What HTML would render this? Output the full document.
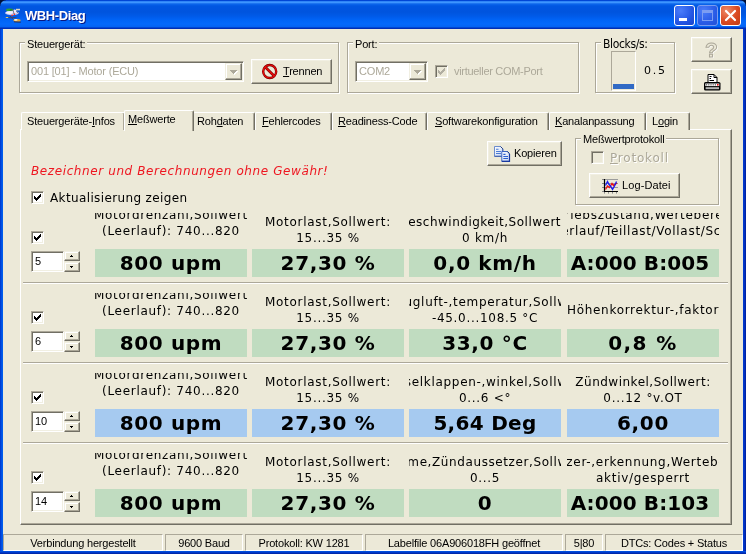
<!DOCTYPE html>
<html lang="de">
<head>
<meta charset="utf-8">
<title>WBH-Diag</title>
<style>
html,body{margin:0;padding:0;}
body{width:746px;height:554px;overflow:hidden;background:#ECE9D8;position:relative;
  font-family:"Liberation Sans","DejaVu Sans",sans-serif;font-size:11px;color:#000;letter-spacing:-0.18px;}
*{box-sizing:border-box;}
i{font-style:normal;}
.abs{position:absolute;}
#win{position:absolute;left:0;top:0;width:746px;height:554px;background:#ECE9D8;overflow:hidden;filter:grayscale(0);}
#titlebar{position:absolute;left:0;top:0;width:746px;height:29px;
  background:linear-gradient(to bottom,#0046D6 0.5px,#2F85F7 1.5px,#3D95FF 2.5px,#1C74F0 3.5px,#0862EA 4.5px,#0056E1 6px,#0054DE 12px,#005AE8 16px,#0064F6 20px,#0469FB 24px,#0464F4 26.5px,#0048D4 27.5px,#002EB5 28.5px,#0030B8 29px);}
#bl{position:absolute;left:0;top:29px;width:3px;height:525px;background:linear-gradient(to right,#0033C8,#0050E4 50%,#0062F0);}
#br{position:absolute;right:0;top:29px;width:3px;height:525px;background:linear-gradient(to left,#001C98,#0030C0 50%,#003CD4);}
#bb{position:absolute;left:0;bottom:0;width:746px;height:3px;background:linear-gradient(to bottom,#0058E8,#0038C8 50%,#00209C);}
#title{position:absolute;left:25px;top:8px;font-weight:bold;font-size:13px;line-height:15px;color:#fff;text-shadow:1px 1px 0 #0A1883;white-space:nowrap;letter-spacing:-0.4px;}
.tbtn{position:absolute;top:5px;width:21px;height:21px;border:1px solid #fff;border-radius:3px;}
.gbl{position:absolute;background:#ECE9D8;padding:0 2px;white-space:nowrap;line-height:13px;}
.t{position:absolute;white-space:nowrap;line-height:13px;}
.dis{color:#ACA899;}
.v{font-family:"DejaVu Sans","Liberation Sans",sans-serif;letter-spacing:0;}
.lab{position:absolute;width:152px;overflow:hidden;font-family:"DejaVu Sans","Liberation Sans",sans-serif;font-size:12px;line-height:16px;letter-spacing:0.7px;}
.lab span{position:absolute;left:-100px;right:-100px;text-align:center;white-space:nowrap;}
.val{position:absolute;width:152px;height:28px;text-align:center;font-family:"DejaVu Sans","Liberation Sans",sans-serif;font-weight:bold;font-size:20px;line-height:28px;letter-spacing:0.65px;white-space:nowrap;overflow:hidden;}
.g{background:#C0DCC0;}
.b{background:#A6CAF0;}
.sep{position:absolute;left:23px;width:705px;height:2px;border-top:1px solid #ACA899;border-bottom:1px solid #fff;}
.btn{position:absolute;border:1px solid;border-color:#fff #716F64 #716F64 #fff;background:#ECE9D8;box-shadow:inset -1px -1px 0 #ACA899,inset 1px 1px 0 #F1EFE2;}
.edit{position:absolute;background:#fff;border:1px solid;border-color:#ACA899 #fff #fff #ACA899;box-shadow:inset 1px 1px 0 #716F64,inset -1px -1px 0 #F1EFE2;}
.edit span{position:absolute;left:3px;top:3px;line-height:13px;white-space:nowrap;}
.cbtn{position:absolute;border:1px solid;border-color:#F1EFE2 #716F64 #716F64 #F1EFE2;background:#ECE9D8;box-shadow:inset -1px -1px 0 #ACA899,inset 1px 1px 0 #fff;}
.spin{position:absolute;width:16px;border:1px solid;border-color:#F1EFE2 #716F64 #716F64 #F1EFE2;background:#ECE9D8;box-shadow:inset -1px -1px 0 #ACA899,inset 1px 1px 0 #fff;}
.up{position:absolute;left:5px;top:3px;width:3px;height:2px;background:linear-gradient(#000,#000) 1px 0/1px 1px no-repeat,linear-gradient(#000,#000) 0 1px/3px 1px no-repeat;}
.dn{position:absolute;left:5px;top:3px;width:3px;height:2px;background:linear-gradient(#000,#000) 0 0/3px 1px no-repeat,linear-gradient(#000,#000) 1px 1px/1px 1px no-repeat;}
.cbtn .dn{left:4px;top:6px;width:8px;height:5px;background:linear-gradient(#ACA899,#ACA899) 0px 0px/7px 1px no-repeat,linear-gradient(#ACA899,#ACA899) 1px 1px/5px 1px no-repeat,linear-gradient(#ACA899,#ACA899) 2px 2px/3px 1px no-repeat,linear-gradient(#ACA899,#ACA899) 3px 3px/1px 1px no-repeat,linear-gradient(#fff,#fff) 1px 1px/7px 1px no-repeat,linear-gradient(#fff,#fff) 2px 2px/5px 1px no-repeat,linear-gradient(#fff,#fff) 3px 3px/3px 1px no-repeat,linear-gradient(#fff,#fff) 4px 4px/1px 1px no-repeat;}
.cb{position:absolute;width:13px;height:13px;border:1px solid;border-color:#ACA899 #fff #fff #ACA899;background:#fff;box-shadow:inset 1px 1px 0 #716F64,inset -1px -1px 0 #F1EFE2;}
.cbd{background:#ECE9D8;}
.chk{position:absolute;left:2px;top:2px;width:7px;height:7px;background:linear-gradient(#000,#000) 0 2px/1px 3px no-repeat,linear-gradient(#000,#000) 1px 3px/1px 3px no-repeat,linear-gradient(#000,#000) 2px 4px/1px 3px no-repeat,linear-gradient(#000,#000) 3px 3px/1px 3px no-repeat,linear-gradient(#000,#000) 4px 2px/1px 3px no-repeat,linear-gradient(#000,#000) 5px 1px/1px 3px no-repeat,linear-gradient(#000,#000) 6px 0/1px 3px no-repeat;}
.chkd{filter:invert(67%) sepia(8%) saturate(300%) hue-rotate(10deg);}
.panel{position:absolute;border:1px solid;border-color:#fff #716F64 #716F64 #fff;box-shadow:inset -1px -1px 0 #ACA899;}
.tab{position:absolute;top:112px;height:18px;border:1px solid;border-color:#fff #716F64 transparent #fff;border-bottom:0;border-radius:2px 2px 0 0;box-shadow:inset -1px 0 0 #ACA899;background:#ECE9D8;}
.tab span{position:absolute;top:2px;line-height:13px;white-space:nowrap;}
.tab.act{top:110px;height:21px;}
.sbp{position:absolute;top:534px;height:17px;border:1px solid;border-color:#ACA899 #fff #fff #ACA899;text-align:center;line-height:16px;white-space:nowrap;overflow:hidden;}
.gb{position:absolute;border:1px solid #ACA899;box-shadow:1px 1px 0 #fff,inset 1px 1px 0 #fff;}
</style>
</head>
<body>
<div id="win">
  <div id="titlebar"></div>
  <div id="bl"></div><div id="br"></div><div id="bb"></div>
  <svg class="abs" style="left:5px;top:8px" width="16" height="15" viewBox="0 0 16 15">
    <ellipse cx="4.6" cy="1.9" rx="3.6" ry="1.4" fill="#2EA234"/><ellipse cx="6.2" cy="2.6" rx="1.6" ry="1" fill="#176A1E"/>
    <rect x="11" y="0.8" width="4" height="1.6" fill="#DAD8C4"/>
    <ellipse cx="7" cy="5" rx="7" ry="2.2" fill="#C9C9F2"/><ellipse cx="4.5" cy="4.6" rx="3.4" ry="1.3" fill="#F4F4FF"/>
    <circle cx="9.6" cy="3.4" r="2" fill="#EDEDFB"/><path d="M8 1.2 L9 6 M11.2 3 L13.5 5.5" stroke="#555A78" stroke-width="0.8"/>
    <circle cx="7.1" cy="7.4" r="0.8" fill="#FF2A10"/><circle cx="9.4" cy="6.3" r="0.8" fill="#FF2A10"/>
    <path d="M1 9.3 L6 9.9 L11.5 9.2 M5 8 L8.5 11.5" stroke="#3F4468" stroke-width="1" fill="none"/><rect x="0.8" y="9" width="2.4" height="1" fill="#D6C870"/>
    <ellipse cx="12" cy="12.4" rx="3.6" ry="1.4" fill="#E9A233"/><ellipse cx="10.8" cy="11.9" rx="1.8" ry="0.8" fill="#F8F4E8"/><path d="M9 13.8 L15.8 14.2" stroke="#2A2F50" stroke-width="1"/>
  </svg>
  <div class="abs" style="left:0;top:0;width:6px;height:6px;background:radial-gradient(circle at 100% 100%,rgba(0,16,58,0) 5.2px,#00103A 6.2px)"></div>
  <div class="abs" style="right:0;top:0;width:6px;height:6px;background:radial-gradient(circle at 0 100%,rgba(0,16,58,0) 5.2px,#00103A 6.2px)"></div>
  <div id="title">WBH-Diag</div>
  <div class="tbtn" style="left:674px;background:radial-gradient(circle at 30% 25%,#4B7DFA 0%,#2456E4 60%,#1A44C8 100%)"><i style="position:absolute;left:4px;top:12px;width:8px;height:3px;background:#fff"></i></div>
  <div class="tbtn" style="left:697px;border-color:#7A9CF0;background:radial-gradient(circle at 30% 25%,#4B7DFA 0%,#2A5BE6 60%,#2250D8 100%)"><i style="position:absolute;left:4px;top:4px;width:11px;height:11px;border:1px solid #7C9DF2;border-top-width:3px"></i></div>
  <div class="tbtn" style="left:720px;background:radial-gradient(circle at 30% 25%,#EE8A68 0%,#DA4A22 55%,#C23A14 100%)">
    <svg style="position:absolute;left:3px;top:3px" width="13" height="13" viewBox="0 0 13 13"><path d="M2 2 L11 11 M11 2 L2 11" stroke="#fff" stroke-width="2.2" stroke-linecap="round"/></svg></div>

  <!-- Steuergerät group -->
  <div class="gb" style="left:19px;top:42px;width:320px;height:51px"></div>
  <div class="gbl" style="left:25px;top:38px">Steuergerät:</div>
  <div class="edit" style="left:27px;top:61px;width:217px;height:21px"><span class="dis" style="left:3px">001 [01] - Motor (ECU)</span></div>
  <div class="cbtn" style="left:225px;top:63px;width:17px;height:17px"><i class="dn"></i></div>
  <div class="btn" style="left:251px;top:59px;width:81px;height:25px"></div>
  <svg class="abs" style="left:261px;top:63px" width="18" height="18" viewBox="0 0 18 18"><g fill="none"><circle cx="8.7" cy="8.5" r="6.5" stroke="#7C0000" stroke-width="2.4"/><path d="M4.2 4 L13.2 13" stroke="#7C0000" stroke-width="2.7"/><circle cx="8.7" cy="8.5" r="6.5" stroke="#EC0A0A" stroke-width="1.2"/><path d="M4.2 4 L13.2 13" stroke="#EC0A0A" stroke-width="1.4"/></g></svg>
  <div class="t" style="left:283px;top:65px"><u>T</u>rennen</div>

  <!-- Port group -->
  <div class="gb" style="left:347px;top:42px;width:232px;height:51px"></div>
  <div class="gbl" style="left:353px;top:38px">Port:</div>
  <div class="edit" style="left:355px;top:61px;width:73px;height:21px"><span class="dis" style="left:3px">COM2</span></div>
  <div class="cbtn" style="left:409px;top:63px;width:17px;height:17px"><i class="dn"></i></div>
  <div class="cb cbd" style="left:435px;top:65px"><i class="chk chkd"></i></div>
  <div class="t dis" style="left:454px;top:65px;letter-spacing:-0.3px">virtueller COM-Port</div>

  <!-- Blocks/s -->
  <div class="gb" style="left:595px;top:42px;width:80px;height:51px"></div>
  <div class="gbl" style="left:601px;top:37px;font-family:'DejaVu Sans Condensed','DejaVu Sans',sans-serif;font-size:12px;line-height:14px;letter-spacing:-0.35px">Blocks/s:</div>
  <div class="abs" style="left:611px;top:51px;width:25px;height:40px;border:1px solid;border-color:#ACA899 #fff #fff #ACA899"></div>
  <div class="abs" style="left:613px;top:84px;width:21px;height:5px;background:#316AC5"></div>
  <div class="t v" style="left:644px;top:64px;font-size:11px;line-height:14px;letter-spacing:1.7px">0.5</div>
  <div class="btn" style="left:691px;top:37px;width:41px;height:25px"></div>
  <div class="t" style="left:705px;top:38px;font-size:21px;line-height:24px;font-weight:bold;letter-spacing:0;color:#ECE9D8;-webkit-text-stroke:1px #ACA899;text-shadow:1px 1px 0 #fff">?</div>
  <div class="btn" style="left:691px;top:69px;width:41px;height:25px"></div>
  <svg class="abs" style="left:703px;top:73px" width="19" height="19" viewBox="0 0 19 19"><path d="M5 9.5V1.5H11L14 4.5V9.5Z" fill="#fff" stroke="#000"/><path d="M11 1.5V4.5H14" fill="none" stroke="#000"/><path d="M6.5 3.5H8.5M6.5 5.5H8M6.5 7.5H11" stroke="#000"/><rect x="1" y="9" width="16.5" height="8.5" rx="1.6" fill="#000"/><rect x="2.3" y="10.5" width="14" height="2.6" fill="#fff"/><path d="M3 11.8H13.5" stroke="#777" stroke-width="1.4" stroke-dasharray="1 0.8"/><rect x="14" y="11" width="1.6" height="1.6" fill="#F01010"/><rect x="2.6" y="14.2" width="13.4" height="2" fill="#B8B8B8"/></svg>

  <!-- tabs -->
  <div class="panel" style="left:20px;top:129px;width:712px;height:396px"></div>
  <div class="tab" style="left:21px;width:104px"><span style="left:5px">Steuergeräte-<u>I</u>nfos</span></div>
  <div class="tab" style="left:193px;width:62px"><span style="left:3px">Roh<u>d</u>aten</span></div>
  <div class="tab" style="left:255px;width:77px"><span style="left:6px"><u>F</u>ehlercodes</span></div>
  <div class="tab" style="left:332px;width:95px"><span style="left:5px"><u>R</u>eadiness-Code</span></div>
  <div class="tab" style="left:427px;width:122px"><span style="left:7px"><u>S</u>oftwarekonfiguration</span></div>
  <div class="tab" style="left:549px;width:97px"><span style="left:5px"><u>K</u>analanpassung</span></div>
  <div class="tab" style="left:646px;width:44px"><span style="left:5px">L<u>o</u>gin</span></div>
  <div class="tab act" style="left:124px;width:70px"><span style="left:3px"><u>M</u>eßwerte</span></div>

  <!-- tab content -->
  <div class="btn" style="left:487px;top:141px;width:75px;height:25px"></div>
  <svg class="abs" style="left:493px;top:145px" width="18" height="18" viewBox="0 0 18 18"><defs><linearGradient id="pg" x1="0" y1="0" x2="1" y2="1"><stop offset="0" stop-color="#FFFFFF"/><stop offset="1" stop-color="#C4D4F4"/></linearGradient></defs>
    <path d="M1.5 1.5H7.5L9.8 3.8V11.3H1.5Z" fill="url(#pg)" stroke="#6C8CCC"/><path d="M1.5 11.3H9.8V4" fill="none" stroke="#3C5CA8"/><path d="M7.5 1.5L9.8 3.8" stroke="#203C80"/>
    <path d="M3 4.3H5.5M3 6.5H8M3 8.5H8" stroke="#4C7CD4" stroke-width="1.1"/>
    <path d="M8.8 6.5H14.3L16.5 8.7V16.3H8.8Z" fill="url(#pg)" stroke="#3C64C0"/><path d="M8.8 16.3H16.5V9" fill="none" stroke="#1838A0" stroke-width="1.2"/><path d="M14.3 6.5L16.5 8.7" stroke="#102C78"/>
    <path d="M10.3 9.4H12.5M10.3 11.5H15M10.3 13.5H15" stroke="#2C60D0" stroke-width="1.2"/></svg>
  <div class="t" style="left:514px;top:147px">Kopieren</div>

  <div class="gb" style="left:575px;top:138px;width:144px;height:67px"></div>
  <div class="gbl" style="left:581px;top:133px">Meßwertprotokoll</div>
  <div class="cb cbd" style="left:591px;top:151px"></div>
  <div class="t v dis" style="left:610px;top:150px;font-size:12px;line-height:16px;letter-spacing:0.8px;text-shadow:1px 1px 0 #fff"><u>P</u>rotokoll</div>
  <div class="btn" style="left:589px;top:173px;width:91px;height:25px"></div>
  <svg class="abs" style="left:601px;top:178px" width="18" height="17" viewBox="0 0 18 17"><path d="M4 1.5H17M4 5.5H17M4 9.5H17" stroke="#9C9C9C"/><path d="M1 1.5H3M1 5.5H3M1 9.5H3M1 13.5H3M3.5 14V15.6M7.5 14V15.6M11.5 14V15.6M15.5 14V15.6" stroke="#8C8C8C"/><path d="M3.5 1V13.5H17" fill="none" stroke="#000" stroke-width="1.2"/><path d="M4.5 11.5L6.5 8L8.5 9.5L11 5.5L12.5 7.5L16 5" fill="none" stroke="#F01010" stroke-width="1.3"/><path d="M4.5 7.5L6.5 3.5L8 6.5L9.5 8L11.5 11.5L13.5 8L15.5 3.5" fill="none" stroke="#1818F0" stroke-width="1.3"/></svg>
  <div class="t" style="left:622px;top:179px;letter-spacing:0.1px">Log-Datei</div>

  <div class="t v" style="left:31px;top:163px;font-size:12px;line-height:16px;font-style:italic;color:#EE1620;letter-spacing:0.6px">Bezeichner und Berechnungen ohne Gewähr!</div>
  <div class="cb" style="left:31px;top:191px"><i class="chk"></i></div>
  <div class="t v" style="left:50px;top:190px;font-size:12px;line-height:16px;letter-spacing:0.37px">Aktualisierung zeigen</div>

<!-- row 1 -->
<div class="cb" style="left:31px;top:231px"><i class="chk"></i></div>
<div class="edit" style="left:31px;top:251px;width:33px;height:21px"><span>5</span></div>
<div class="spin" style="left:64px;top:251px;height:10px"><i class="up"></i></div>
<div class="spin" style="left:64px;top:262px;height:10px"><i class="dn"></i></div>
<div class="lab" style="left:95px;top:213px;height:36px"><span style="top:-6px;left:-100px;right:-100px">Motordrehzahl,Sollwert</span><span style="top:10px;left:-100px;right:-100px">(Leerlauf): 740...820</span></div>
<div class="val g" style="left:95px;top:249px">800 upm</div>
<div class="lab" style="left:252px;top:213px;height:36px"><span style="top:1px;left:-100px;right:-100px">Motorlast,Sollwert:</span><span style="top:17px;left:-100px;right:-100px">15...35 %</span></div>
<div class="val g" style="left:252px;top:249px">27,30 %</div>
<div class="lab" style="left:409px;top:213px;height:36px"><span style="top:1px;left:-103px;right:-97px;letter-spacing:0.5px">Geschwindigkeit,Sollwert:</span><span style="top:17px;left:-100px;right:-100px">0 km/h</span></div>
<div class="val g" style="left:409px;top:249px">0,0 km/h</div>
<div class="lab" style="left:567px;top:213px;height:36px"><span style="top:-6px;left:-98px;right:-102px">Betriebszustand,Wertebereich:</span><span style="top:10px;left:-97px;right:-103px">Leerlauf/Teillast/Vollast/Schub</span></div>
<div class="val g" style="left:567px;top:249px;letter-spacing:0.1px;padding-right:6px">A:000 B:005</div>
<div class="sep" style="top:282px"></div>
<!-- row 2 -->
<div class="cb" style="left:31px;top:311px"><i class="chk"></i></div>
<div class="edit" style="left:31px;top:331px;width:33px;height:21px"><span>6</span></div>
<div class="spin" style="left:64px;top:331px;height:10px"><i class="up"></i></div>
<div class="spin" style="left:64px;top:342px;height:10px"><i class="dn"></i></div>
<div class="lab" style="left:95px;top:293px;height:36px"><span style="top:-6px;left:-100px;right:-100px">Motordrehzahl,Sollwert</span><span style="top:10px;left:-100px;right:-100px">(Leerlauf): 740...820</span></div>
<div class="val g" style="left:95px;top:329px">800 upm</div>
<div class="lab" style="left:252px;top:293px;height:36px"><span style="top:1px;left:-100px;right:-100px">Motorlast,Sollwert:</span><span style="top:17px;left:-100px;right:-100px">15...35 %</span></div>
<div class="val g" style="left:252px;top:329px">27,30 %</div>
<div class="lab" style="left:409px;top:293px;height:36px"><span style="top:1px;left:-103px;right:-97px">Ansaugluft-,temperatur,Sollwert:</span><span style="top:17px;left:-100px;right:-100px">-45.0...108.5 °C</span></div>
<div class="val g" style="left:409px;top:329px">33,0 °C</div>
<div class="lab" style="left:567px;top:293px;height:36px"><span style="top:9px;left:-100px;right:-100px">Höhenkorrektur-,faktor</span></div>
<div class="val g" style="left:567px;top:329px;letter-spacing:1.4px">0,8 %</div>
<div class="sep" style="top:362px"></div>
<!-- row 3 -->
<div class="cb" style="left:31px;top:391px"><i class="chk"></i></div>
<div class="edit" style="left:31px;top:411px;width:33px;height:21px"><span>10</span></div>
<div class="spin" style="left:64px;top:411px;height:10px"><i class="up"></i></div>
<div class="spin" style="left:64px;top:422px;height:10px"><i class="dn"></i></div>
<div class="lab" style="left:95px;top:373px;height:36px"><span style="top:-6px;left:-100px;right:-100px">Motordrehzahl,Sollwert</span><span style="top:10px;left:-100px;right:-100px">(Leerlauf): 740...820</span></div>
<div class="val b" style="left:95px;top:409px">800 upm</div>
<div class="lab" style="left:252px;top:373px;height:36px"><span style="top:1px;left:-100px;right:-100px">Motorlast,Sollwert:</span><span style="top:17px;left:-100px;right:-100px">15...35 %</span></div>
<div class="val b" style="left:252px;top:409px">27,30 %</div>
<div class="lab" style="left:409px;top:373px;height:36px"><span style="top:1px;left:-102px;right:-98px">Drosselklappen-,winkel,Sollwert:</span><span style="top:17px;left:-100px;right:-100px">0...6 &lt;°</span></div>
<div class="val b" style="left:409px;top:409px;letter-spacing:0.3px">5,64 Deg</div>
<div class="lab" style="left:567px;top:373px;height:36px"><span style="top:1px;left:-100px;right:-100px;letter-spacing:0.5px">Zündwinkel,Sollwert:</span><span style="top:17px;left:-100px;right:-100px">0...12 °v.OT</span></div>
<div class="val b" style="left:567px;top:409px">6,00</div>
<div class="sep" style="top:442px"></div>
<!-- row 4 -->
<div class="cb" style="left:31px;top:471px"><i class="chk"></i></div>
<div class="edit" style="left:31px;top:491px;width:33px;height:21px"><span>14</span></div>
<div class="spin" style="left:64px;top:491px;height:10px"><i class="up"></i></div>
<div class="spin" style="left:64px;top:502px;height:10px"><i class="dn"></i></div>
<div class="lab" style="left:95px;top:453px;height:36px"><span style="top:-6px;left:-100px;right:-100px">Motordrehzahl,Sollwert</span><span style="top:10px;left:-100px;right:-100px">(Leerlauf): 740...820</span></div>
<div class="val g" style="left:95px;top:489px">800 upm</div>
<div class="lab" style="left:252px;top:453px;height:36px"><span style="top:1px;left:-100px;right:-100px">Motorlast,Sollwert:</span><span style="top:17px;left:-100px;right:-100px">15...35 %</span></div>
<div class="val g" style="left:252px;top:489px">27,30 %</div>
<div class="lab" style="left:409px;top:453px;height:36px"><span style="top:1px;left:-100px;right:-100px;letter-spacing:0.6px">Summe,Zündaussetzer,Sollwert:</span><span style="top:17px;left:-100px;right:-100px">0...5</span></div>
<div class="val g" style="left:409px;top:489px">0</div>
<div class="lab" style="left:567px;top:453px;height:36px"><span style="top:1px;left:-100px;right:-100px">Aussetzer-,erkennung,Wertebereich:</span><span style="top:17px;left:-100px;right:-100px">aktiv/gesperrt</span></div>
<div class="val g" style="left:567px;top:489px;letter-spacing:0.1px;padding-right:6px">A:000 B:103</div>

  <!-- status bar -->
  <div class="sbp" style="left:3px;width:160px">Verbindung hergestellt</div>
  <div class="sbp" style="left:165px;width:78px">9600 Baud</div>
  <div class="sbp" style="left:245px;width:118px">Protokoll: KW 1281</div>
  <div class="sbp" style="left:365px;width:198px">Labelfile 06A906018FH geöffnet</div>
  <div class="sbp" style="left:565px;width:38px">5|80</div>
  <div class="sbp" style="left:605px;width:138px">DTCs: Codes + Status</div>
</div>
</body>
</html>
